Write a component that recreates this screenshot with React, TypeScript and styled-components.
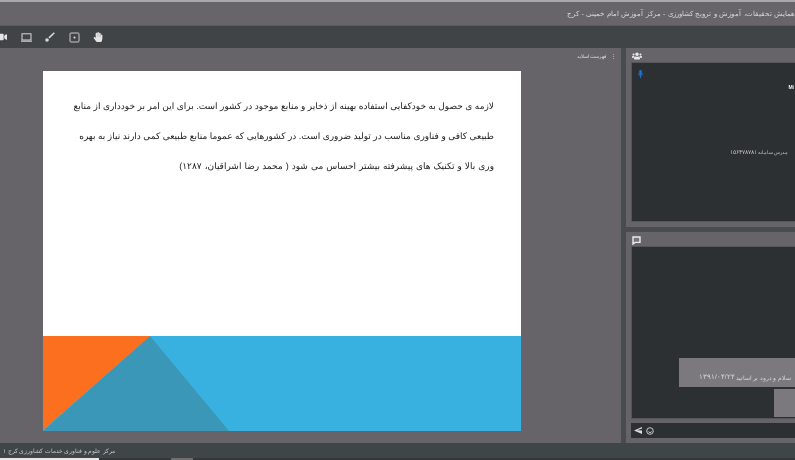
import { FC } from "react";
import styled, { createGlobalStyle } from "styled-components";
import { FaHandPaper, FaUsers, FaVideo } from "react-icons/fa";

const GlobalStyle = createGlobalStyle`
    html, body {
        margin: 0;
        width: 795px;
        height: 460px;
        overflow: hidden;
        background: #3f4345;
    }
`;

const Screen = styled.div`
    display: flex;
    flex-direction: column;
    width: 795px;
    height: 460px;
    overflow: hidden;
    font-family: "Liberation Sans", "Noto Sans", sans-serif;
    filter: blur(0.5px);
`;

const TopEdge = styled.div`
    height: 2px;
    background: #a9a8ab;
`;

const Header = styled.div`
    display: flex;
    justify-content: flex-end;
    align-items: center;
    height: 24px;
    overflow: hidden;
    background: #676569;
    border-bottom: 1px solid #5a5a5d;
    box-sizing: border-box;
    color: #d6d8e0;
    font-size: 7px;
    word-spacing: 0.5px;
    white-space: nowrap;
`;

const Toolbar = styled.div`
    display: flex;
    align-items: center;
    gap: 12px;
    height: 22px;
    overflow: hidden;
    background: #404446;
    color: #e4e4e4;
`;

const ToolIcon = styled.span<{ $offset?: number }>`
    display: flex;
    flex: none;
    justify-content: center;
    width: 12px;
    font-size: 10px;
    margin-left: ${(p) => p.$offset ?? 0}px;
`;

const Body = styled.div`
    display: flex;
    flex: none;
    gap: 5px;
    height: 395px;
    background: #484c4e;
`;

const Stage = styled.div`
    display: flex;
    flex-direction: column;
    flex: none;
    width: 621px;
    background: #666469;
`;

const StageTitle = styled.div`
    display: flex;
    justify-content: flex-end;
    align-items: center;
    gap: 5px;
    height: 23px;
    padding: 0 5px 8px 0;
    box-sizing: border-box;
    color: #dcdce0;
    font-size: 5px;
`;

const Slide = styled.div`
    display: flex;
    flex-direction: column;
    width: 478px;
    height: 360px;
    margin-left: 43px;
    background: #fff;
`;

const SlideText = styled.div`
    flex: 1;
    padding: 20px 27px 0 30px;
    color: #1b1b1b;
    direction: rtl;
    font-size: 9px;
    text-rendering: geometricPrecision;
`;

const SlideLine = styled.div<{ $wordGap?: number }>`
    height: 30px;
    line-height: 30px;
    white-space: nowrap;
    word-spacing: ${(p) => p.$wordGap ?? 0}px;
`;

const SlideArt = styled.svg`
    display: block;
    width: 478px;
    height: 95px;
`;

const Side = styled.div`
    display: flex;
    flex-direction: column;
    flex: 1;
    gap: 5px;
    min-width: 0;
    overflow: hidden;
`;

const Panel = styled.div<{ $height: number }>`
    display: flex;
    flex-direction: column;
    height: ${(p) => p.$height}px;
    padding: 2px 0 5px 5px;
    box-sizing: border-box;
    background: #666469;
`;

const PanelHeader = styled.div`
    display: flex;
    flex: none;
    align-items: center;
    height: 12px;
    padding-left: 1px;
    color: #e8e8e8;
    font-size: 10px;
`;

const Dark = styled.div`
    flex: 1;
    min-height: 0;
    background: #2d3033;
    border: 1px solid #55565a;
    border-right: 0;
    box-sizing: border-box;
`;

const UserList = styled(Dark)`
    display: flex;
    flex-direction: column;
    padding: 7px 0 0 6px;
    color: #1f6fd2;
    font-size: 9px;
`;

const UserMark = styled.div`
    height: 10px;
    margin-top: 4px;
    padding-right: 1px;
    color: #f2f2f2;
    font-size: 5px;
    font-weight: bold;
    line-height: 10px;
    text-align: right;
`;

const UserRow = styled.div`
    display: flex;
    align-items: baseline;
    gap: 1px;
    margin-top: 56px;
    padding-left: 92px;
    color: #bfc1c4;
    font-size: 6px;
    white-space: nowrap;
`;

const RowNote = styled.span`
    font-size: 5px;
`;

const ChatArea = styled(Dark)`
    display: flex;
    flex-direction: column;
    justify-content: flex-end;
    align-items: flex-end;
    gap: 2px;
    padding-bottom: 1px;
`;

const Bubble = styled.div<{ $width: number; $height: number }>`
    display: flex;
    align-items: flex-end;
    width: ${(p) => p.$width}px;
    height: ${(p) => p.$height}px;
    padding: 0 0 6px 20px;
    box-sizing: border-box;
    overflow: hidden;
    background: #7b797e;
    color: #d6d7da;
    font-size: 6.5px;
    white-space: nowrap;
`;

const BubbleNote = styled.span`
    margin-left: 1px;
    font-size: 5.5px;
`;

const ChatInput = styled.div`
    display: flex;
    flex: none;
    align-items: center;
    gap: 4px;
    height: 15px;
    margin-top: 4px;
    padding-left: 3px;
    background: #2d3033;
    color: #dcdcdc;
`;

const StatusBar = styled.div`
    display: flex;
    align-items: center;
    flex: none;
    height: 15px;
    padding-left: 3px;
    background: #404548;
    color: #c6c8d0;
    font-size: 5.7px;
    white-space: nowrap;
`;

const BottomEdge = styled.div`
    display: flex;
    flex: 1;
    background: #34373a;
`;

const BottomTab = styled.div`
    width: 99px;
    background: #e8e8e8;
`;

const BottomThumb = styled.div`
    width: 22px;
    margin-left: 72px;
    background: #6e6e70;
`;

const ScreenIcon: FC = () => (
    <svg width="11" height="9" viewBox="0 0 11 9" fill="none" stroke="#d8d8d8" strokeWidth="1">
        <rect x="1" y="0.8" width="9" height="6.2" />
        <path d="M0 8.2h11" />
    </svg>
);

const BrushIcon: FC = () => (
    <svg width="10" height="10" viewBox="0 0 10 10" fill="#d8d8d8">
        <path d="M8.8 .2l1 1L4.6 6.4 3.4 5.2z" />
        <circle cx="2" cy="8" r="1.8" />
    </svg>
);

const DotSquareIcon: FC = () => (
    <svg width="11" height="11" viewBox="0 0 11 11" fill="none" stroke="#c9cacb" strokeWidth="1">
        <rect x="1" y="1" width="9" height="9" rx="1" />
        <circle cx="5.5" cy="5.5" r="1" fill="#e4e4e4" stroke="none" />
    </svg>
);

const ChatIcon: FC = () => (
    <svg width="9" height="9" viewBox="0 0 9 9" fill="#77767a" stroke="#ececec" strokeWidth="1.4">
        <path d="M1 1h7v5.4H3.2L1 8z" />
    </svg>
);

const SendIcon: FC = () => (
    <svg width="8" height="7" viewBox="0 0 8 7" fill="currentColor">
        <path d="M8 0v1.6L3 3.2l5 .4V7L0 3.5z" />
    </svg>
);

const SmileIcon: FC = () => (
    <svg width="8" height="8" viewBox="0 0 8 8" fill="none" stroke="#c8c8c8" strokeWidth="1">
        <circle cx="4" cy="4" r="3.3" />
        <path d="M2.2 4.4a2 2 0 0 0 3.6 0" />
    </svg>
);

const MicIcon: FC = () => (
    <svg width="5" height="8" viewBox="0 0 5 8" fill="currentColor">
        <rect x="1.2" y="0" width="2.6" height="5" rx="1.2" />
        <path d="M0 3.6h.8a1.7 1.7 0 0 0 3.4 0H5a2.5 2.5 0 0 1-2 2.4V8H2V6a2.5 2.5 0 0 1-2-2.4z" />
    </svg>
);

export default function App() {
    return (
        <Screen>
            <GlobalStyle />
            <TopEdge />
            <Header>
                <span dir="rtl">همایش تحقیقات، آموزش و ترویج کشاورزی - مرکز آموزش امام خمینی - کرج</span>
            </Header>
            <Toolbar>
                <ToolIcon $offset={-4}>
                    <FaVideo />
                </ToolIcon>
                <ToolIcon>
                    <ScreenIcon />
                </ToolIcon>
                <ToolIcon>
                    <BrushIcon />
                </ToolIcon>
                <ToolIcon>
                    <DotSquareIcon />
                </ToolIcon>
                <ToolIcon>
                    <FaHandPaper />
                </ToolIcon>
            </Toolbar>
            <Body>
                <Stage>
                    <StageTitle>
                        <span dir="rtl">فهرست اسلاید</span>
                        <span>⋮</span>
                    </StageTitle>
                    <Slide>
                        <SlideText>
                            <SlideLine>
                                لازمه ی حصول به خودکفایی استفاده بهینه از ذخایر و منابع موجود در کشور است. برای این امر بر خودداری از منابع
                            </SlideLine>
                            <SlideLine>
                                طبیعی کافی و فناوری مناسب در تولید ضروری است. در کشورهایی که عموما منابع طبیعی کمی دارند نیاز به بهره
                            </SlideLine>
                            <SlideLine $wordGap={0.5}>
                                وری بالا و تکنیک های پیشرفته بیشتر احساس می شود ( محمد رضا اشراقیان، ۱۲۸۷)
                            </SlideLine>
                        </SlideText>
                        <SlideArt viewBox="0 0 478 95" preserveAspectRatio="none">
                            <rect width="478" height="95" fill="#38b1e0" />
                            <polygon points="107,0 186,95 0,95" fill="#3a97b8" />
                            <polygon points="0,0 107,0 0,94" fill="#fb6f1e" />
                        </SlideArt>
                    </Slide>
                </Stage>
                <Side>
                    <Panel $height={179}>
                        <PanelHeader>
                            <FaUsers />
                        </PanelHeader>
                        <UserList>
                            <MicIcon />
                            <UserMark>Mi</UserMark>
                            <UserRow dir="ltr">
                                ۱۵۶۴۷۸۷۸۱
                                <RowNote dir="rtl">مدرس سامانه</RowNote>
                            </UserRow>
                        </UserList>
                    </Panel>
                    <Panel $height={211}>
                        <PanelHeader>
                            <ChatIcon />
                        </PanelHeader>
                        <ChatArea>
                            <Bubble $width={116} $height={29}>
                                ۱۳۹۱/۰۴/۲۴
                                <BubbleNote dir="rtl">سلام و درود بر اساتید</BubbleNote>
                            </Bubble>
                            <Bubble $width={21} $height={28} />
                        </ChatArea>
                        <ChatInput>
                            <SendIcon />
                            <SmileIcon />
                        </ChatInput>
                    </Panel>
                </Side>
            </Body>
            <StatusBar>
                <span dir="rtl">مرکز علوم و فناوری خدمات کشاورزی کرج ۱</span>
            </StatusBar>
            <BottomEdge>
                <BottomTab />
                <BottomThumb />
            </BottomEdge>
        </Screen>
    );
}
